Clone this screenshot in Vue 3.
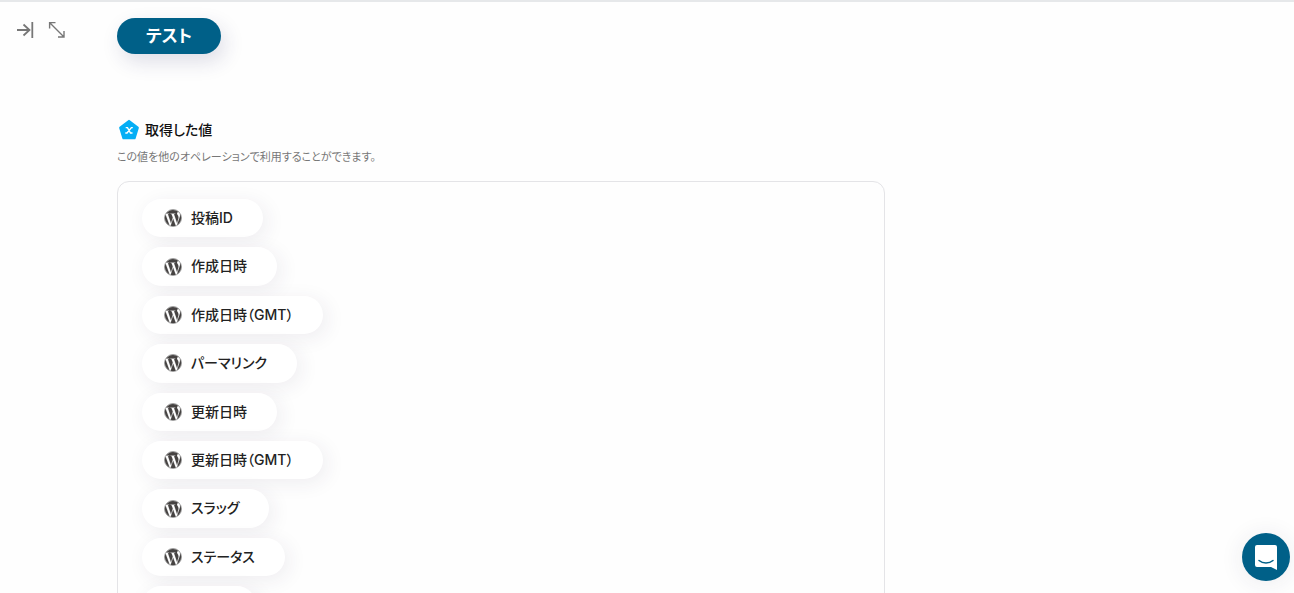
<script setup>
const values = [
  '投稿ID',
  '作成日時',
  '作成日時（GMT）',
  'パーマリンク',
  '更新日時',
  '更新日時（GMT）',
  'スラッグ',
  'ステータス',
]
</script>

<template>
  <div class="panel">
    <nav class="tools" aria-label="パネル操作">
      <button type="button" class="tool" aria-label="閉じる">
        <svg width="18" height="18" viewBox="0 0 18 18" fill="none" stroke="#777" stroke-width="1.800">
          <path d="M1 9h13M7.500 3.500 13.500 9 7.500 14.500M16.300 1v16" />
        </svg>
      </button>
      <button type="button" class="tool" aria-label="拡大">
        <svg width="18" height="18" viewBox="0 0 18 18" fill="none" stroke="#777" stroke-width="1.400">
          <path d="M1.500 1.500l14.500 14.500M1.600 7.500V1.600H7.500M16 10v6h-6" />
        </svg>
      </button>
    </nav>

    <main class="content">
      <button type="button" class="test">テスト</button>

      <section class="result">
        <h2 class="title">
          <svg width="24" height="24" viewBox="0 0 24 24" aria-hidden="true">
            <path
              d="M12 3.200 20.600 9.700 17.400 20H6.600L3.400 9.700Z"
              fill="#05aef5"
              stroke="#05aef5"
              stroke-width="2.600"
              stroke-linejoin="round"
            />
            <path d="M8.700 9.600h1.800l3 5.400h2M15.800 9.600h-1.400L10 15H8.300" fill="none" stroke="#fff" stroke-width="1.400" />
          </svg>
          取得した値
        </h2>
        <p class="note">この値を他のオペレーションで利用することができます。</p>

        <ul class="values">
          <li v-for="value in values" :key="value" class="value">
            <svg class="wp" width="18" height="18" viewBox="0 0 24 24" aria-hidden="true">
              <circle cx="12" cy="12" r="11.300" fill="#fff" stroke="#999" stroke-width="1.200" />
              <path
                fill="#464342"
                stroke="#464342"
                stroke-width="0.200"
                d="M21.469 6.825c.84 1.537 1.318 3.300 1.318 5.175 0 3.979-2.156 7.456-5.363 9.325l3.295-9.527c.615-1.540.82-2.771.82-3.864 0-.405-.026-.780-.070-1.110m-7.981.105c.647-.030 1.232-.105 1.232-.105.582-.075.514-.930-.067-.899 0 0-1.755.135-2.880.135-1.064 0-2.850-.150-2.850-.150-.585-.030-.661.855-.075.885 0 0 .540.061 1.125.090l1.680 4.605-2.370 7.080L5.354 6.900c.649-.030 1.234-.100 1.234-.100.585-.075.516-.930-.065-.896 0 0-1.746.138-2.874.138-.200 0-.438-.008-.690-.015C4.911 3.150 8.235 1.215 12 1.215c2.809 0 5.365 1.072 7.286 2.833-.046-.003-.091-.009-.141-.009-1.060 0-1.812.923-1.812 1.914 0 .890.513 1.643 1.060 2.531.411.720.890 1.643.890 2.977 0 .915-.354 1.994-.821 3.479l-1.075 3.585-3.900-11.610.001.014zM12 22.784c-1.059 0-2.081-.153-3.048-.437l3.237-9.406 3.315 9.087c.024.053.050.101.078.149-1.120.393-2.325.609-3.582.609M1.211 12c0-1.564.336-3.050.935-4.390L7.290 21.709C3.694 19.960 1.212 16.271 1.211 12"
              />
            </svg>
            <span>{{ value }}</span>
          </li>
          <li class="value" aria-hidden="true"><span class="blank"></span></li>
        </ul>
      </section>
    </main>

    <button type="button" class="chat" aria-label="チャットを開く">
      <svg width="22" height="25" viewBox="0 0 22 25" aria-hidden="true">
        <path d="M2 0h18A2 2 0 0 1 22 2V25l-6-3H2A2 2 0 0 1 0 20V2A2 2 0 0 1 2 0Z" fill="#fff" />
        <path d="M4 15.500c4 3.400 10 3.400 14 0" fill="none" stroke="#006088" stroke-width="1.500" stroke-linecap="round" />
      </svg>
    </button>
  </div>
</template>

<style>
body {
  background: #fefefe;
}
html {
  overflow: hidden;
}
</style>

<style scoped>
.panel {
  display: flex;
  height: 100vh;
  box-sizing: border-box;
  border-top: 2px solid #e6e8ea;
  overflow: hidden;
  font-family: Inter, "Noto Sans CJK JP", sans-serif;
  font-feature-settings: "palt";
  line-height: 1.6;
  color: #222;
}
button {
  border: 0;
  padding: 0;
  font: inherit;
  cursor: pointer;
}
.tools {
  display: flex;
  flex: 0 0 101px;
  align-items: flex-start;
  gap: 14px;
  padding: 19px 0 0 16px;
  box-sizing: border-box;
  margin-right: 16px;
}
.tool {
  display: flex;
  background: none;
}
.content {
  flex: 0 1 768px;
  min-width: 0;
  padding-top: 16px;
}
.test {
  display: block;
  width: 104px;
  height: 36px;
  border-radius: 18px;
  background: #006088;
  color: #fff;
  font-size: 17px;
  font-weight: 700;
  line-height: 36px;
  box-shadow: 4px 8px 20px rgba(40, 40, 100, 0.15);
}
.result {
  margin-top: 64px;
}
.title {
  display: flex;
  align-items: center;
  gap: 4px;
  margin: 0;
  font-size: 14px;
  font-weight: 500;
  line-height: 24px;
  color: #111;
}
.note {
  margin: 6px 0 0;
  font-size: 11px;
  line-height: 18px;
  color: #777;
}
.values {
  display: flex;
  flex-direction: column;
  align-items: flex-start;
  gap: 10px;
  margin: 15px 0 0;
  padding: 17px 24px;
  border: 1px solid #e4e4e7;
  border-radius: 12px;
  list-style: none;
}
.value {
  display: flex;
  align-items: center;
  gap: 9px;
  padding: 8px 30px 8px 22px;
  border-radius: 20px;
  background: #fff;
  font-size: 14px;
  font-weight: 500;
  box-shadow: 4px 4px 20px rgba(50, 40, 80, 0.08);
}
.wp {
  flex: none;
}
.blank {
  width: 62px;
  height: 22px;
}
.chat {
  position: fixed;
  right: 4px;
  bottom: 12px;
  display: grid;
  place-items: center;
  width: 48px;
  height: 48px;
  border-radius: 50%;
  background: #006088;
  box-shadow: 0 2px 24px rgba(40, 40, 80, 0.09);
}
</style>
